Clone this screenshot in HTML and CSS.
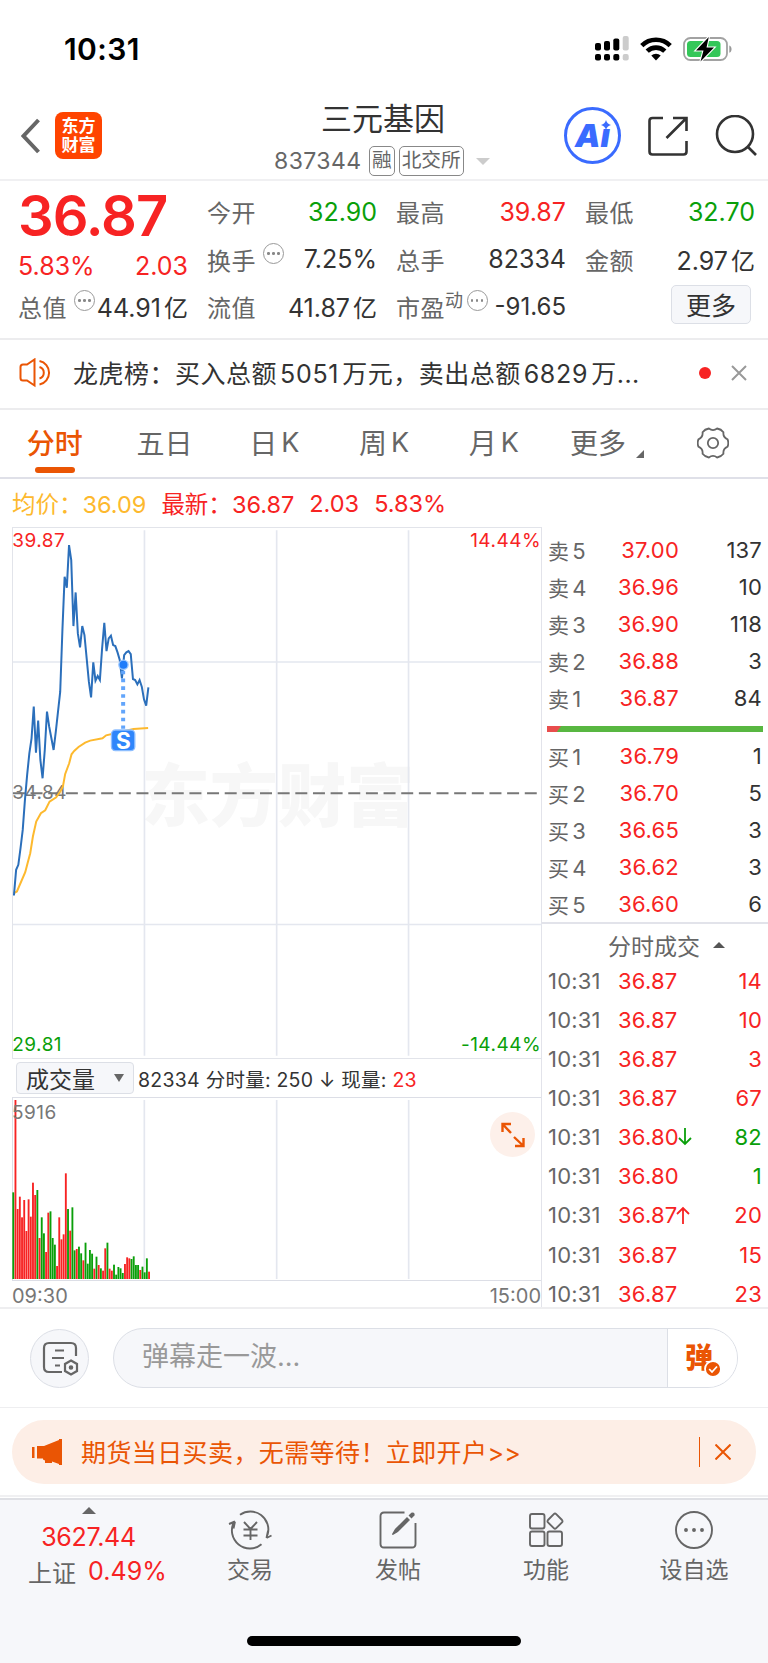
FILE: index.html
```
<!DOCTYPE html>
<html lang="zh-CN">
<head>
  <meta charset="UTF-8" />
  <meta name="viewport" content="width=device-width, initial-scale=1.0" />
  <title>三元基因 837344</title>
  <link rel="stylesheet" href="styles.css">
</head>
<body>
  <div class="status">
    <span class="clock">10:31</span>
    <svg class="signal" width="34" height="25" viewBox="0 0 34 25">
      <g fill="#000">
        <rect x="0" y="7" width="6" height="7.5" rx="2" /><rect x="9" y="5" width="6" height="9.5" rx="2" /><rect x="18.3" y="2.5" width="6" height="12" rx="2" />
        <rect x="0" y="18" width="6" height="6.5" rx="2" /><rect x="9" y="18" width="6" height="6.5" rx="2" /><rect x="18.3" y="18" width="6" height="6.5" rx="2" />
      </g>
      <g fill="#ccc"><rect x="27.7" y="0" width="6" height="14.5" rx="2" /><rect x="27.7" y="18" width="6" height="6.5" rx="2" /></g>
    </svg>
    <svg class="wifi" width="32" height="24" viewBox="0 0 32 24">
      <g fill="none" stroke="#000" stroke-width="4.6">
        <path d="M1.8 8.6a20.2 20.2 0 0 1 28.4 0" /><path d="M7.2 14.2a12.6 12.6 0 0 1 17.6 0" />
      </g>
      <path d="M11.3 18.6a6.8 6.8 0 0 1 9.4 0L16 23.6z" />
    </svg>
    <svg class="battery" width="50" height="26" viewBox="0 0 50 26">
      <rect x="1" y="2" width="43" height="22" rx="6.5" fill="none" stroke="#a2a2a2" stroke-width="1.8" />
      <path d="M46.3 9.5c3 1 3 6.3 0 7.3z" fill="#999" />
      <rect x="4" y="5" width="33.5" height="16" rx="3.5" fill="#34c759" />
      <path d="M25.8 1L13 14.5h7.5L17.5 25.5 31 11.5h-7.5z" stroke="#fff" stroke-width="2.2" paint-order="stroke" />
    </svg>
  </div>

  <header class="header">
    <svg class="back" width="20" height="36" viewBox="0 0 20 36"><path d="M17.5 2L2.5 18l15 16" /></svg>
    <div class="logo"><span>东方</span><span>财富</span></div>
    <div class="title">
      <h1>三元基因</h1>
      <div class="code">
        <span class="num">837344</span><span class="tag">融</span><span class="tag">北交所</span>
        <i class="caret"></i>
      </div>
    </div>
    <div class="ai">A<span>ı</span>
      <svg width="10" height="10" viewBox="0 0 10 10"><path d="M5 0Q6 4 10 5 6 6 5 10 4 6 0 5 4 4 5 0" /></svg>
    </div>
    <svg class="share" width="42" height="42" viewBox="0 0 42 42">
      <path d="M16 3H5.5Q2.5 3 2.5 6V36.5Q2.5 39.5 5.5 39.5H36.5Q39.5 39.5 39.5 36.5V26M26 3h13.5V16M39 3.5L19.5 23" />
    </svg>
    <svg class="search" width="42" height="42" viewBox="0 0 42 42"><circle cx="20" cy="19" r="18" /><path d="M32.5 31.5l8.5 8.5" /></svg>
  </header>

  <section class="quote">
    <div class="col">
      <div class="price">36.87</div>
      <div class="row change"><span>5.83%</span><span>2.03</span></div>
      <div class="row"><label>总值</label><i class="info"></i><b>44.91<em>亿</em></b></div>
    </div>
    <div class="col">
      <div class="row"><label>今开</label><b class="down">32.90</b></div>
      <div class="row"><label>换手</label><i class="info"></i><b>7.25%</b></div>
      <div class="row"><label>流值</label><b>41.87<em>亿</em></b></div>
    </div>
    <div class="col">
      <div class="row"><label>最高</label><b class="up">39.87</b></div>
      <div class="row"><label>总手</label><b>82334</b></div>
      <div class="row pe"><label>市盈<sup>动</sup></label><i class="info"></i><b>-91.65</b></div>
    </div>
    <div class="col">
      <div class="row"><label>最低</label><b class="down">32.70</b></div>
      <div class="row"><label>金额</label><b>2.97<em>亿</em></b></div>
      <div class="row"><button class="more">更多</button></div>
    </div>
  </section>

  <section class="news">
    <svg class="horn" width="34" height="30" viewBox="0 0 34 30">
      <path d="M15.5 1.5v26L8 22.5H4Q1.5 22.5 1.5 20V9Q1.5 6.5 4 6.5H8zM20.5 3a12 12 0 0 1 0 23.5M20.5 9a6 6 0 0 1 0 11.5" />
    </svg>
    <p>龙虎榜：买入总额<span>5051</span>万元，卖出总额<span>6829</span>万...</p>
    <i class="dot"></i>
    <svg class="close" width="16" height="16" viewBox="0 0 16 16"><path d="M1 1l14 14M15 1L1 15" /></svg>
  </section>

  <nav class="tabs">
    <a class="tab active">分时</a>
    <a class="tab">五日</a>
    <a class="tab">日<span>K</span></a>
    <a class="tab">周<span>K</span></a>
    <a class="tab">月<span>K</span></a>
    <a class="tab">更多<i class="corner"></i></a>
    <a class="tab gear">
      <svg width="32" height="32" viewBox="0 0 34 34">
        <path d="M32.5 20.9Q34 17 32.5 13.1Q27.4 11 28.1 5.5Q25.7 2.3 21.4 1.6Q17 5 12.6 1.6Q8.3 2.3 5.9 5.5Q6.6 11 1.5 13.1Q0 17 1.5 20.9Q6.6 23 5.9 28.5Q8.3 31.7 12.6 32.4Q17 29 21.4 32.4Q25.7 31.7 28.1 28.5Q27.4 23 32.5 20.9z" />
        <circle cx="17" cy="17" r="5.5" />
      </svg>
    </a>
  </nav>

  <div class="legend">
    <span class="avg">均价：<b>36.09</b></span>
    <span class="up">最新：<b>36.87</b></span>
    <b class="up">2.03</b>
    <b class="up">5.83%</b>
  </div>

  <main class="board">
    <div class="charts">
      <svg class="chart" viewBox="40.5 23.5 1581 1591.5">
        <text class="watermark" x="424" y="902">东方财富</text>
        <path class="grid" d="M433 30V1608M830 30V1608M1226 30V1608M38 426H1626M38 1214H1626" />
        <path class="dash" d="M38 820H1614" />
        <text class="label up" x="36" y="80">39.87</text>
        <text class="label up end" x="1624" y="80">14.44%</text>
        <text class="label gray" x="36" y="838">34.84</text>
        <text class="label down" x="36" y="1594">29.81</text>
        <text class="label down end" x="1624" y="1594">-14.44%</text>
        <polyline id="avgLine" class="avg-line" />
        <polyline id="priceLine" class="price-line" />
        <path class="marker-line" d="M369 452V626" />
        <circle class="marker-dot" cx="370" cy="434" r="14" />
        <rect class="marker-box" x="334" y="630" width="70" height="62" rx="12" />
        <text class="marker-text" x="370" y="686">S</text>
      </svg>
      <div class="toolbar">
        <button class="select">成交量<i></i></button>
        <span>82334 分时量: 250 <span class="arrow">↓</span> 现量: <b class="up">23</b></span>
      </div>
      <div class="volume">
        <svg viewBox="40.5 174 1581 543">
          <path class="grid" d="M433 180V717M830 180V717M1226 180V717" />
          <g id="bars"></g>
          <text class="label gray" x="36" y="237">5916</text>
        </svg>
        <div class="expand">
          <svg width="24" height="26" viewBox="0 0 24 26"><path d="M1.5 10V2H10M1.5 2l8.5 9M22.5 16v8H14M22.5 24L13 15" /></svg>
        </div>
      </div>
      <div class="times"><span>09:30</span><span>15:00</span></div>
    </div>

    <aside class="book">
      <ul class="orders">
        <li><span>卖<i>5</i></span><b>37.00</b><em>137</em></li>
        <li><span>卖<i>4</i></span><b>36.96</b><em>10</em></li>
        <li><span>卖<i>3</i></span><b>36.90</b><em>118</em></li>
        <li><span>卖<i>2</i></span><b>36.88</b><em>3</em></li>
        <li><span>卖<i>1</i></span><b>36.87</b><em>84</em></li>
      </ul>
      <div class="ratio"></div>
      <ul class="orders">
        <li><span>买<i>1</i></span><b>36.79</b><em>1</em></li>
        <li><span>买<i>2</i></span><b>36.70</b><em>5</em></li>
        <li><span>买<i>3</i></span><b>36.65</b><em>3</em></li>
        <li><span>买<i>4</i></span><b>36.62</b><em>3</em></li>
        <li><span>买<i>5</i></span><b>36.60</b><em>6</em></li>
      </ul>
      <div class="deals-title">分时成交<i></i></div>
      <ul class="deals">
        <li><span>10:31</span><b>36.87</b><em class="up">14</em></li>
        <li><span>10:31</span><b>36.87</b><em class="up">10</em></li>
        <li><span>10:31</span><b>36.87</b><em class="up">3</em></li>
        <li><span>10:31</span><b>36.87</b><em class="up">67</em></li>
        <li><span>10:31</span><b>36.80</b><svg class="dir down" viewBox="0 0 14 18"><path d="M7 0v16M1 10l6 6 6-6" /></svg><em class="down">82</em></li>
        <li><span>10:31</span><b>36.80</b><em class="down">1</em></li>
        <li><span>10:31</span><b>36.87</b><svg class="dir up" viewBox="0 0 14 18"><path d="M7 18V2M1 8l6-6 6 6" /></svg><em class="up">20</em></li>
        <li><span>10:31</span><b>36.87</b><em class="up">15</em></li>
        <li><span>10:31</span><b>36.87</b><em class="up">23</em></li>
      </ul>
    </aside>
  </main>

  <section class="danmu">
    <div class="round">
      <svg width="38" height="36" viewBox="0 0 38 36">
        <path d="M20 31H7Q2 31 2 26V7Q2 2 7 2H29Q34 2 34 7V15M13 9.5h9M10 17h12M13 24.5h5" />
        <path d="M29 19.5l6 3.5v7l-6 3.5-6-3.5v-7z" /><circle cx="29" cy="26.5" r="1.2" />
      </svg>
    </div>
    <div class="input">
      <span>弹幕走一波...</span>
      <div class="send">弹
        <svg width="18" height="18" viewBox="0 0 18 18"><circle cx="9" cy="9" r="8" /><path d="M5.2 9l2.8 3L13 6.5" /></svg>
      </div>
    </div>
  </section>

  <section class="promo">
    <div class="banner">
      <svg class="mega" width="32" height="28" viewBox="0 0 32 28">
        <path d="M1 9h2.5v11H1zM6 8h7L28 2V1h3v26h-3v-1l-7-2.5V25h-7v-2.5L12 21.5v-1H6z" />
      </svg>
      <p>期货当日买卖，无需等待！立即开户&gt;&gt;</p>
      <i class="bar"></i>
      <svg class="close" width="16" height="16" viewBox="0 0 16 16"><path d="M.5.5l15 15M15.5.5l-15 15" /></svg>
    </div>
  </section>

  <footer class="bottom">
    <div class="items">
      <div class="index">
        <i></i>
        <b>3627.44</b>
        <div><span>上证</span><b>0.49%</b></div>
      </div>
      <a>
        <svg width="44" height="40" viewBox="0 0 44 40">
          <path d="M12 4.8A18 18 0 0 1 39.5 25M38.5 28l5-2.5M38.5 28l1.5-7M33.5 34.2A18 18 0 0 1 6 12M7 11.5l-6 2.5M7 11.5l-1.5 7M16 12l6.5 7 6.5-7M15.5 19.5h14M15.5 25.5h14M22.5 19v11" />
        </svg>
        交易
      </a>
      <a>
        <svg width="44" height="40" viewBox="0 0 44 40">
          <path d="M28.5 2.5H8Q4.5 2.5 4.5 6V34Q4.5 37.5 8 37.5H36Q39.5 37.5 39.5 34V13" />
          <path class="pen" d="M16.5 24.5l3-5L31 8l2 2-11.5 11.5zM33.5 5.5l2-2q2.500-1 2.500 1.500l-2.500 2.500z" />
        </svg>
        发帖
      </a>
      <a>
        <svg width="44" height="40" viewBox="0 0 44 40">
          <rect x="6" y="4" width="14.5" height="14.5" rx="2" /><rect x="6" y="21.5" width="14.5" height="14.5" rx="2" /><rect x="23.5" y="21.5" width="14.5" height="14.5" rx="2" />
          <path d="M29.8 4.2Q31 3 32.2 4.2L38 10Q39 11.2 38 12.4L32.2 18.2Q31 19.4 29.8 18.2L24 12.4Q23 11.2 24 10z" />
        </svg>
        功能
      </a>
      <a>
        <svg width="44" height="40" viewBox="0 0 44 40">
          <circle cx="22" cy="20" r="18" /><g class="solid"><circle cx="14" cy="20" r="1" /><circle cx="22" cy="20" r="1" /><circle cx="30" cy="20" r="1" /></g>
        </svg>
        设自选
      </a>
    </div>
    <div class="home"></div>
  </footer>

  <script src="chart.js"></script>
</body>
</html>
```
FILE: styles.css
```
* {
  box-sizing: border-box;
}
body {
  margin: 0;
  width: 768px;
  background-color: #fff;
  color: #333;
  font-family: Inter, "Noto Sans CJK SC", sans-serif;
  font-size: 24px;
}
h1, p, ul {
  margin: 0;
  padding: 0;
}
ul {
  list-style: none;
}
b, em, i {
  font-weight: normal;
  font-style: normal;
}
svg {
  display: block;
  flex-shrink: 0;
}
.up {
  color: #f72323;
}
.down {
  color: #0a9f0a;
}

/* status bar */
.status {
  display: flex;
  align-items: center;
  height: 97px;
  padding-left: 64px;
}
.clock {
  width: 531px;
  color: #000;
  font-size: 30px;
  font-weight: 600;
  letter-spacing: 0.4px;
}
.wifi {
  margin-left: 11px;
}
.battery {
  margin-left: 11px;
}

/* header */
.header {
  display: flex;
  align-items: center;
  height: 84px;
  padding: 0 11px 5px 21px;
  border-bottom: 2px solid #f0f0f2;
}
.back path {
  fill: none;
  stroke: #666;
  stroke-width: 4;
}
.logo {
  display: flex;
  flex-direction: column;
  align-items: center;
  justify-content: center;
  width: 47px;
  height: 47px;
  margin-left: 14px;
  border-radius: 8px;
  background-color: #ff4400;
  color: #fff;
  font-size: 17px;
  font-weight: 700;
  line-height: 19px;
}
.title {
  flex: 1;
  padding-left: 172px;
}
.title h1 {
  margin: 3px 0 0 47px;
  font-size: 31px;
  font-weight: 400;
  line-height: 42px;
}
.code {
  display: flex;
  align-items: center;
  height: 30px;
  margin-top: 6px;
  color: #666;
  font-size: 23px;
}
.code .num {
  width: 95px;
  letter-spacing: 0.4px;
}
.tag {
  height: 30px;
  margin-right: 4px;
  padding: 0 2px;
  border: 1.5px solid #888;
  border-radius: 5px;
  font-size: 19.7px;
  line-height: 26px;
}
.caret {
  margin-left: 8px;
  border: 7px solid transparent;
  border-top-color: #ccc;
  border-bottom: 0;
}
.ai {
  position: relative;
  display: flex;
  align-items: center;
  justify-content: center;
  width: 57px;
  height: 57px;
  margin-right: 26px;
  border: 3.5px solid #3a6bff;
  border-radius: 50%;
  color: #3a6bff;
  font-size: 32px;
  font-weight: 900;
  font-style: italic;
}
.ai svg {
  position: absolute;
  top: 10px;
  right: 7px;
  fill: #3a6bff;
}
.share path, .search path, .search circle {
  fill: none;
  stroke: #333;
  stroke-width: 2.6;
}
.search {
  margin-left: 26px;
}

/* quote summary */
.quote {
  display: flex;
  gap: 20px;
  height: 159px;
  padding: 7px 0 0 19px;
  border-bottom: 2px solid #ececee;
}
.col {
  width: 169px;
}
.price {
  height: 54px;
  margin-left: -1px;
  color: #f72323;
  font-size: 56px;
  font-weight: 600;
  line-height: 57px;
  letter-spacing: -1px;
}
.row {
  display: flex;
  align-items: center;
  height: 47.5px;
  white-space: nowrap;
}
.row label {
  margin-left: -1px;
  color: #666;
  letter-spacing: 0.5px;
}
.row b {
  margin-left: auto;
  font-size: 25px;
}
.row em {
  margin-left: 3px;
  font-size: 24px;
}
.change {
  justify-content: space-between;
  height: 41px;
  padding-top: 7px;
  color: #f72323;
  font-size: 25px;
}
.change span:first-child {
  margin-left: -1px;
}
.info {
  display: flex;
  align-items: center;
  justify-content: center;
  width: 21px;
  height: 21px;
  margin: -12px 0 0 7px;
  border: 1.5px solid #999;
  border-radius: 50%;
}
.info::after {
  content: "";
  width: 2.6px;
  height: 2.6px;
  border-radius: 50%;
  background-color: #888;
  box-shadow: -5px 0 #888, 5px 0 #888;
}
.pe sup {
  display: inline-block;
  font-size: 18px;
  line-height: 18px;
  vertical-align: 10px;
}
.pe .info {
  margin-left: 3px;
}
.pe b {
  font-size: 24px;
}
.more {
  width: 80px;
  height: 39px;
  margin-left: 85px;
  margin-top: -5px;
  padding: 0;
  border: 1.5px solid #dcdfe6;
  border-radius: 5px;
  background-color: #f6f7fa;
  color: #333;
  font: 25px/34px "Noto Sans CJK SC", sans-serif;
}

/* news line */
.news {
  display: flex;
  align-items: center;
  height: 70px;
  padding: 0 21px 2px 19px;
  border-bottom: 2px solid #ececee;
}
.horn path {
  fill: none;
  stroke: #ea5504;
  stroke-width: 2;
}
.news p {
  flex: 1;
  margin: -3px 0 0 20px;
  font-size: 25px;
  letter-spacing: 0.5px;
  white-space: nowrap;
}
.news p span {
  margin: 0 3px;
  letter-spacing: 0.7px;
}
.news .dot {
  width: 12px;
  height: 12px;
  border-radius: 50%;
  background-color: #f72323;
}
.close path {
  fill: none;
  stroke: #999;
  stroke-width: 2;
}
.news .close {
  margin-left: 20px;
}

/* period tabs */
.tabs {
  display: flex;
  height: 69px;
  border-bottom: 2px solid #dfe0e8;
}
.tab {
  position: relative;
  display: flex;
  align-items: center;
  justify-content: center;
  gap: 4px;
  width: 110px;
  padding-bottom: 3px;
  color: #666;
  font-size: 28px;
}
.tab span {
  font-size: 27px;
}
.tab.active {
  color: #ea5504;
  font-weight: 500;
}
.tab.active::after {
  content: "";
  position: absolute;
  left: 35px;
  bottom: 4px;
  width: 40px;
  height: 6px;
  border-radius: 3px;
  background-color: #ea5504;
}
.tab .corner {
  margin: 24px -7px 0 6px;
  border-left: 8px solid transparent;
  border-bottom: 8px solid #666;
}
.tab.gear {
  padding-bottom: 1px;
}
.tab.gear path, .tab.gear circle {
  fill: none;
  stroke: #666;
  stroke-width: 1.9;
}

.legend {
  display: flex;
  align-items: center;
  gap: 15px;
  height: 48px;
  padding-left: 12px;
  font-size: 23.5px;
}
.avg {
  color: #fdb92e;
}

/* chart and order book */
.board {
  display: flex;
  height: 782px;
  border-bottom: 2px solid #eeeef0;
}
.charts {
  width: 542px;
  padding-left: 12px;
  border-right: 1.5px solid #e2e3ea;
}
.chart {
  width: 529px;
  height: 532px;
  border: solid #e2e4ea;
  border-width: 1.5px 0 1.5px 1.5px;
  overflow: visible;
}
.grid {
  fill: none;
  stroke: #e4e7ef;
  stroke-width: 5;
}
.dash {
  stroke: #777;
  stroke-width: 6;
  stroke-dasharray: 36 17;
}
.label {
  fill: #f72323;
  font-size: 57px;
  letter-spacing: 1.5px;
}
.label.down {
  fill: #0a9f0a;
}
.label.gray {
  fill: #777;
}
.end {
  text-anchor: end;
}
.watermark {
  fill: #f7f7f7;
  font-size: 205px;
  font-weight: 900;
}
.price-line, .avg-line {
  fill: none;
  stroke: #2b6fbb;
  stroke-width: 6;
}
.avg-line {
  stroke: #fdb92e;
}
.marker-line {
  stroke: #62a5fb;
  stroke-width: 12;
  stroke-dasharray: 11 12.5;
}
.marker-dot {
  fill: #1f7cfa;
  stroke: #9cc8ff;
  stroke-width: 4;
}
.marker-box {
  fill: #2f86fb;
  stroke: #8dbeff;
  stroke-width: 4;
}
.marker-text {
  fill: #fff;
  font-size: 68px;
  font-weight: 700;
  text-anchor: middle;
}
.toolbar {
  display: flex;
  align-items: center;
  gap: 4px;
  height: 38px;
  padding-left: 4px;
  font-size: 19.5px;
  letter-spacing: 0.25px;
  white-space: nowrap;
}
.select {
  display: flex;
  align-items: center;
  width: 118px;
  height: 32px;
  padding: 0 0 0 9px;
  border: 1.5px solid #dcdfe6;
  border-radius: 4px;
  background-color: #f6f7fa;
  color: #333;
  font: 23px/28px "Noto Sans CJK SC", sans-serif;
}
.select i {
  margin-left: 19px;
  border: 5px solid transparent;
  border-top: 8px solid #666;
  border-bottom: 0;
}
.volume {
  position: relative;
  width: 529px;
  height: 184px;
  border: solid #dcdee6;
  border-width: 1.5px 0 1.5px 1.5px;
}
.volume > svg {
  width: 528px;
  height: 181px;
  overflow: visible;
}
.expand {
  position: absolute;
  top: 14px;
  right: 6px;
  display: flex;
  align-items: center;
  justify-content: center;
  width: 45px;
  height: 45px;
  border-radius: 50%;
  background-color: #fdf0ea;
}
.expand path {
  fill: none;
  stroke: #ea5504;
  stroke-width: 2.4;
}
.times {
  display: flex;
  justify-content: space-between;
  color: #777;
  font-size: 20px;
  line-height: 31px;
}
.book {
  width: 226px;
}
.orders, .deals {
  font-size: 22px;
  letter-spacing: 0.2px;
}
.orders li, .deals li {
  display: flex;
  align-items: center;
  height: 36.9px;
  padding: 0 6px 0 6px;
}
.orders {
  height: 184.5px;
}
.orders:first-child {
  margin-top: 5px;
}
.orders span {
  width: 44px;
  color: #666;
  font-size: 21px;
}
.orders span i {
  margin-left: 3px;
  font-size: 22px;
}
.orders b {
  width: 87px;
  text-align: right;
  color: #f72323;
}
.orders em, .deals em {
  margin-left: auto;
}
.ratio {
  width: 216px;
  height: 6px;
  margin: 9px 0 6px 5px;
  background: linear-gradient(125deg, #e84d4d 11px, #58b741 12px);
}
.deals-title {
  display: flex;
  align-items: center;
  height: 39px;
  padding: 5px 0 0 66px;
  border-top: 2px solid #e2e3ea;
  color: #666;
  font-size: 23px;
}
.deals-title i {
  margin-left: 13px;
  border: 6px solid transparent;
  border-bottom-color: #555;
  border-top: 0;
}
.deals li {
  height: 39.15px;
}
.deals span {
  width: 70px;
  color: #666;
  letter-spacing: 0.2px;
}
.deals b {
  color: #f72323;
}
.dir {
  width: 14px;
  height: 18px;
  margin-left: -1px;
  fill: none;
  stroke: currentColor;
  stroke-width: 1.8;
}

/* comment input */
.danmu {
  display: flex;
  align-items: center;
  gap: 24px;
  height: 99px;
  padding-left: 30px;
  border-bottom: 1px solid #eeeef0;
}
.round {
  display: flex;
  align-items: center;
  justify-content: center;
  width: 59px;
  height: 59px;
  padding: 2px 0 0 3px;
  border: 1.5px solid #dcdfe6;
  border-radius: 50%;
  background-color: #f6f7fa;
}
.round svg {
  fill: none;
  stroke: #666;
  stroke-width: 2.2;
}
.input {
  display: flex;
  width: 625px;
  height: 60px;
  overflow: hidden;
  border: 1.5px solid #dcdfe6;
  border-radius: 30px;
  background-color: #f6f7fa;
}
.input span {
  flex: 1;
  padding-left: 28px;
  color: #999;
  font-size: 27px;
  line-height: 55px;
}
.send {
  position: relative;
  width: 70px;
  padding-left: 17px;
  border-left: 1.5px solid #dcdfe6;
  background-color: #fff;
  color: #ea5504;
  font-size: 28px;
  font-weight: 900;
  line-height: 58px;
}
.send svg {
  position: absolute;
  left: 36px;
  top: 31px;
  fill: #ea5504;
  stroke: #fff;
  stroke-width: 1.8;
}

/* promo banner */
.promo {
  height: 89px;
  padding: 12px 12px 0;
  border-bottom: 2px solid #f0f0f2;
}
.banner {
  display: flex;
  align-items: center;
  height: 64px;
  padding: 0 25px 0 19px;
  border-radius: 32px;
  background-color: #fdeee6;
  color: #ea5504;
  font-size: 25px;
}
.mega {
  fill: #ea5504;
}
.banner p {
  flex: 1;
  margin: -3px 0 0 18px;
  letter-spacing: 0.4px;
}
.banner .bar {
  width: 1.5px;
  height: 30px;
  background-color: #ea5504;
}
.banner .close {
  margin-left: 15px;
}
.banner .close path {
  stroke: #ea5504;
}

/* bottom bar */
.bottom {
  height: 165px;
  margin-top: 1px;
  border-top: 2px solid #dfe0e5;
  background-color: #f6f7fa;
}
.items {
  display: flex;
  height: 137px;
}
.items a {
  display: flex;
  flex-direction: column;
  align-items: center;
  width: 148px;
  padding-top: 10px;
  color: #666;
  font-size: 23px;
  line-height: 36px;
}
.items a svg {
  margin-bottom: 2px;
  fill: none;
  stroke: #666;
  stroke-width: 1.9;
}
.items a .solid, .items a .pen {
  fill: #666;
}
.items a .pen {
  stroke-width: 1.4;
}
.index {
  display: flex;
  flex-direction: column;
  align-items: center;
  width: 176px;
  padding: 7px 0 0 1px;
  color: #666;
}
.index i {
  margin-bottom: 4px;
  border: 7px solid transparent;
  border-bottom-color: #666;
  border-top: 0;
}
.index b {
  color: #f72323;
  font-size: 25px;
  line-height: 38px;
  letter-spacing: -0.3px;
}
.index > div {
  display: flex;
  align-items: center;
  gap: 12px;
  height: 32px;
  margin-top: -1px;
  padding-left: 18px;
}
.index > div b {
  letter-spacing: 0.1px;
}
.home {
  width: 274px;
  height: 10px;
  margin: -1px auto 0;
  border-radius: 5px;
  background-color: #000;
}
```
FILE: chart.js
```
// one value per minute, measured down from the top of the panel
const price = [
  1127, 1050, 1035, 985, 930, 840, 765, 700, 655, 560, 698, 602, 720, 775, 690, 575,
  620, 655, 690, 635, 575, 515, 330, 170, 203, 75, 120, 318, 217, 340, 382, 318,
  345, 415, 485, 532, 427, 482, 468, 480, 385, 308, 393, 355, 347, 375, 378, 397,
  420, 475, 405, 397, 393, 402, 477, 480, 493, 480, 500, 538, 557, 502
];

const average = [
  [41, 1120], [50, 1115], [75, 1057], [82, 1030], [90, 1000], [98, 950], [108, 905],
  [122, 880], [135, 871], [148, 845], [168, 832], [180, 815], [188, 800], [195, 762],
  [207, 730], [214, 703], [222, 693], [235, 681], [255, 668], [270, 662], [307, 655],
  [318, 646], [345, 640], [400, 627], [444, 624]
];

const volume = [
  'g457', 'r180', 'r507', 'r470', 'r532', 'r480', 'r573', 'r478', 'r530', 'r428',
  'r465', 'g450', 'r594', 'g532', 'g580', 'r636', 'r518', 'g514', 'g594', 'g614',
  'r678', 'r532', 'r598', 'r583', 'r400', 'g507', 'r572', 'g502', 'g631', 'r627',
  'g620', 'g640', 'r661', 'g608', 'g671', 'g630', 'g641', 'r686', 'g650', 'r675',
  'g685', 'r692', 'r625', 'g608', 'r686', 'r692', 'g674', 'g704', 'g681', 'g685',
  'g699', 'r672', 'r652', 'r655', 'g657', 'g649', 'g675', 'g675', 'r690', 'g680',
  'g697', 'g655', 'r695'
];

document.getElementById('priceLine').setAttribute('points',
  price.map((y, i) => `${41 + i * 6.62},${y}`).join(' '));

document.getElementById('avgLine').setAttribute('points', average.join(' '));

document.getElementById('bars').innerHTML = volume.map((v, i) => {
  const top = Number(v.slice(1));
  const color = v[0] === 'r' ? '#f72323' : '#0a9f0a';
  return `<rect x="${37 + i * 6.57}" y="${top}" width="5.6" height="${717 - top}" fill="${color}" />`;
}).join('');
```
